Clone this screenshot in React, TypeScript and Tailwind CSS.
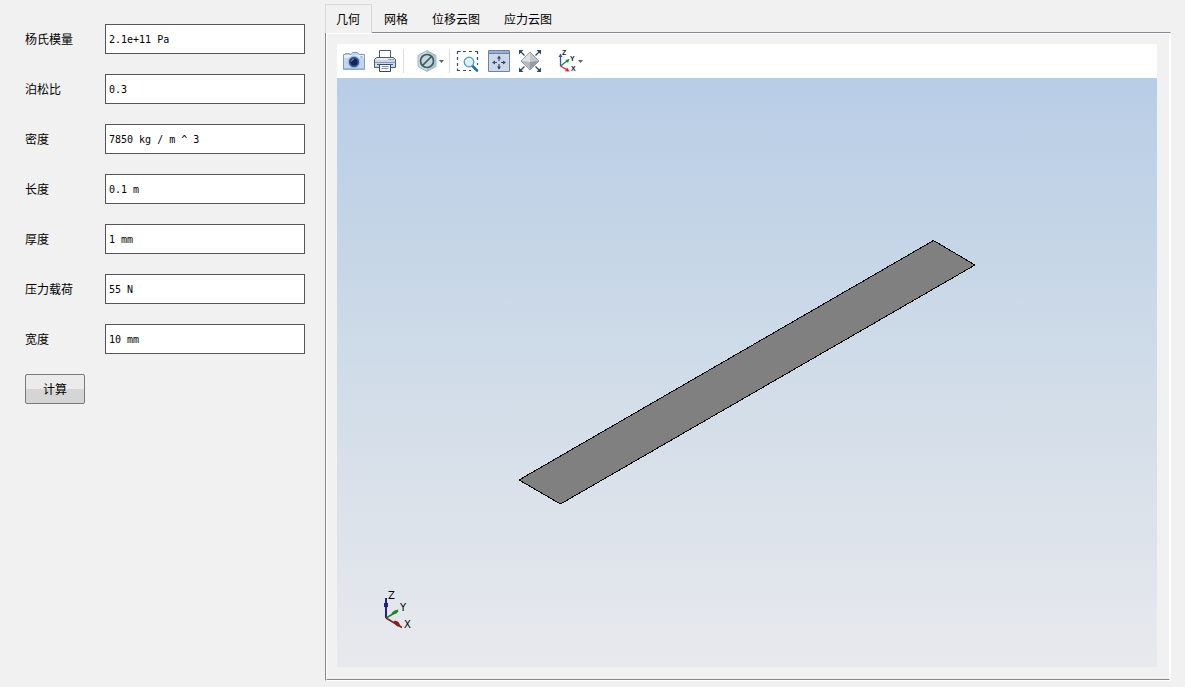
import { useState } from "react";

const FIELDS = [
  { id: "young", label: "杨氏模量", value: "2.1e+11 Pa" },
  { id: "poisson", label: "泊松比", value: "0.3" },
  { id: "density", label: "密度", value: "7850 kg / m ^ 3" },
  { id: "length", label: "长度", value: "0.1 m" },
  { id: "thickness", label: "厚度", value: "1 mm" },
  { id: "load", label: "压力载荷", value: "55 N" },
  { id: "width", label: "宽度", value: "10 mm" },
];

const TABS = ["几何", "网格", "位移云图", "应力云图"];

function CameraIcon() {
  return (
    <svg viewBox="0 0 24 24" className="h-6 w-6">
      <path d="M1.500 5.500h2v-1h4v1h1.500l1.500-2h5l1.500 2h5.500v15h-21z" fill="#c3d6ee" stroke="#7f9dc8" />
      <path d="M2 6h20v3H2z" fill="#e3edf8" />
      <path d="M2 19h20v1.500H2z" fill="#9db8dc" />
      <circle cx="12" cy="13" r="6.500" fill="#a9c1e2" />
      <circle cx="12" cy="13" r="5.200" fill="#38588f" />
      <circle cx="12" cy="13" r="3.600" fill="#10254f" />
      <path d="M9.500 12.500q.3-2.300 2.500-2.500" stroke="#7f9cca" fill="none" />
      <path d="M18.500 8h2" stroke="#5c7fb3" />
    </svg>
  );
}

function PrinterIcon() {
  return (
    <svg viewBox="0 0 24 24" className="h-6 w-6">
      <path d="M6.500 9V1.500h11V9" fill="#fff" stroke="#465b7e" />
      <path d="M3.500 8.500h17l2 2v8h-21v-8z" fill="#cfd7e4" stroke="#465b7e" />
      <path d="M4 9h16v2H4z" fill="#e8edf5" />
      <path d="M2 13.500h20" stroke="#8c9bb5" />
      <path d="M15.500 10.500h1M17.500 10.500h1M19.500 10.500h1" stroke="#465b7e" />
      <path d="M4 15.500h16" stroke="#465b7e" />
      <path d="M6.500 15.500h11v7h-11z" fill="#fff" stroke="#32476c" />
      <path d="M8.500 17.500h7M8.500 19.500h7" stroke="#8192ad" />
    </svg>
  );
}

function HideIcon() {
  return (
    <svg viewBox="0 0 24 24" className="h-6 w-6">
      <path d="M12 1.500l9 5v11l-9 5-9-5v-11z" fill="#b0c9ce" stroke="#9bb8be" />
      <path d="M12 2v20l-8.500-5V7z" fill="#c8dadd" />
      <circle cx="12" cy="12" r="6.500" fill="#c3d6da" stroke="#3e5864" strokeWidth="1.700" />
      <path d="M7.500 16.500l9-9" stroke="#3e5864" strokeWidth="1.700" />
    </svg>
  );
}

function ZoomBoxIcon() {
  return (
    <svg viewBox="0 0 24 24" className="h-6 w-6" fill="none">
      <path
        d="M2.500 5V2.500h3M8 2.500h3M14 2.500h3M20 2.500h2.500V5M22.500 8v3M22.500 14v2M2.500 8v3M2.500 14v3M2.500 19.500v2H5M8 21.500h3M14 21.500h2"
        stroke="#30497a"
        strokeWidth="1.200"
      />
      <path d="M17.500 17l4.500 4.500" stroke="#2a6da6" strokeWidth="2.600" strokeLinecap="round" />
      <circle cx="14" cy="13" r="4.800" fill="#dcf0fb" stroke="#4a9acb" strokeWidth="1.300" />
      <path d="M11 13q0-3 3-3" stroke="#fff" />
    </svg>
  );
}

function FitIcon() {
  return (
    <svg viewBox="0 0 24 24" className="h-6 w-6">
      <path d="M1.500 1.500h21v21h-21z" fill="#ccd8e8" stroke="#6c82a8" />
      <path d="M2 2h20v2H2z" fill="#9aadca" />
      <path d="M2 4.500h20" stroke="#6c82a8" />
      <path d="M12 8v4M12 15v5M6 13.500h4M14 13.500h4" stroke="#33476d" strokeWidth="1.200" />
      <path d="M12 6.500l2 3h-4zM12 20.500l-2-3h4zM5 13.500l3-2v4zM19 13.500l-3 2v-4z" fill="#33476d" />
    </svg>
  );
}

function ExtentsIcon() {
  return (
    <svg viewBox="0 0 24 24" className="h-6 w-6">
      <path d="M11 3l9 9-9 9-9-9z" fill="#c2c7cc" stroke="#7d858e" strokeWidth=".8" />
      <path d="M11 3.500V13l-8.500-1z" fill="#dfe2e5" />
      <path d="M2.500 12l8.500 1v7.500z" fill="#b4bac0" />
      <path d="M19.500 12L11 13v7.500z" fill="#939ba4" />
      <path d="M1.500 2.500l4 4M20.500 2.500l-4 4M1.500 21.500l4-4M20.500 21.500l-4-4" stroke="#2d4872" strokeWidth="1.200" />
      <path d="M0 1h4.500L0 5.500zM22 1v4.500L17.500 1zM0 23v-4.500L4.500 23zM22 23h-4.500l4.500-4.500z" fill="#2d4872" />
    </svg>
  );
}

function ViewAxesIcon() {
  return (
    <svg viewBox="0 0 24 24" className="h-6 w-6 overflow-visible font-['Liberation_Sans',sans-serif] text-[7px] font-bold">
      <path d="M6.500 17V7" stroke="#2d59a5" strokeWidth="1.300" />
      <path d="M6.500 4.500l2 3.500h-4z" fill="#2d59a5" />
      <path d="M6.500 17l6.500-5" stroke="#168447" strokeWidth="1.300" />
      <path d="M15.500 10l-1.500 4-2.500-3z" fill="#168447" />
      <path d="M6.500 17l6 3.500" stroke="#e31f2d" strokeWidth="1.300" />
      <path d="M15.500 22.500l-4.500-.3 2.200-3.700z" fill="#e31f2d" />
      <text x="8" y="6" fill="#222">Z</text>
      <text x="16" y="12" fill="#222">Y</text>
      <text x="17" y="22" fill="#222">X</text>
    </svg>
  );
}

function Caret() {
  return (
    <svg viewBox="0 0 5 3" className="h-[3px] w-[5px]">
      <path d="M0 0h5L2.500 3z" fill="#606060" />
    </svg>
  );
}

function Separator() {
  return <div className="h-6 w-px bg-[#dcdcdc]" />;
}

function Toolbar() {
  return (
    <div className="flex h-[34px] items-center bg-white pl-[5px]">
      <button aria-label="截图"><CameraIcon /></button>
      <button aria-label="打印" className="mr-1.5 ml-[7px]"><PrinterIcon /></button>
      <Separator />
      <button aria-label="隐藏" className="mr-[5px] ml-[11px] flex items-center"><HideIcon /><Caret /></button>
      <Separator />
      <div className="ml-[5px] flex items-center gap-2">
        <button aria-label="框选缩放"><ZoomBoxIcon /></button>
        <button aria-label="适合窗口"><FitIcon /></button>
        <button aria-label="缩放到范围"><ExtentsIcon /></button>
      </div>
      <button aria-label="视图方向" className="ml-[11px] flex items-center"><ViewAxesIcon /><Caret /></button>
    </div>
  );
}

function AxisTriad() {
  return (
    <svg
      viewBox="0 0 40 44"
      className="absolute bottom-[35px] left-[43px] h-11 w-10 font-['DejaVu_Sans',sans-serif] text-[10px]"
    >
      <path d="M6 30V10" stroke="#20208a" strokeWidth="2" />
      <path d="M4 19v-4h4v4z" fill="#20208a" />
      <path d="M6 30l12-7" stroke="#208020" strokeWidth="1.500" />
      <path d="M18.500 21.500l-2 4-4 1-1-1.500 3-2.500z" fill="#208020" />
      <path d="M6 30l16 9.500" stroke="#802020" strokeWidth="1.500" />
      <path d="M13 34.500l2-2 3.500 1.500 2 4-3 .5z" fill="#802020" />
      <text x="8" y="11" fill="#000">Z</text>
      <text x="20" y="23" fill="#000">Y</text>
      <text x="24" y="40" fill="#000">X</text>
    </svg>
  );
}

function Viewport() {
  return (
    <div className="relative flex min-h-0 flex-1 bg-linear-to-b from-[#b8cde6] via-[#d0dce8] to-[#e8e9ed]">
      <svg viewBox="0 0 820 589" className="h-full w-full">
        <path
          d="M596.500 162.500l41.500 24.500-414.500 239-41.500-24z"
          fill="#808080"
          stroke="#000"
          strokeLinejoin="round"
          shapeRendering="crispEdges"
        />
      </svg>
      <AxisTriad />
    </div>
  );
}

export default function App() {
  const [active, setActive] = useState(0);

  return (
    <div className="flex h-screen gap-5 bg-[#f1f1f1] pr-[14px] pb-1.5 pl-[25px] font-['Liberation_Sans','Noto_Sans_CJK_SC',sans-serif] text-xs text-black">
      <form className="flex w-[280px] shrink-0 flex-col items-start gap-5 pt-6" onSubmit={(e) => e.preventDefault()}>
        {FIELDS.map((field) => (
          <div key={field.id} className="flex w-full items-center">
            <label htmlFor={field.id} className="w-20 shrink-0 pt-0.5">{field.label}</label>
            <input
              id={field.id}
              type="text"
              defaultValue={field.value}
              className="h-[30px] min-w-0 flex-1 border border-[#555559] bg-white px-[3px] font-['DejaVu_Sans_Mono',monospace] text-[10px] outline-none"
            />
          </div>
        ))}
        <button
          type="submit"
          className="h-[30px] w-[60px] rounded-xs border border-[#7a7a7a] bg-linear-to-b from-[#ebebeb] from-50% to-[#d5d5d5] to-50% pt-0.5"
        >
          计算
        </button>
      </form>

      <main className="flex min-w-0 flex-1 flex-col pt-1">
        <div role="tablist" className="flex h-7">
          {TABS.map((tab, i) => (
            <button
              key={tab}
              role="tab"
              aria-selected={i === active}
              onClick={() => setActive(i)}
              className={
                i === active
                  ? "z-10 h-[29px] border border-b-0 border-[#d9d9d9] bg-[#f1f1f1] pt-px pr-[11px] pl-[10px]"
                  : "h-[29px] px-3 pt-0.5"
              }
            >
              {tab}
            </button>
          ))}
        </div>
        <div className="flex min-h-0 flex-1 flex-col border border-t-[#85868f] border-r-white border-b-white border-l-[#85868f]">
          <div className="flex min-h-0 flex-1 flex-col border border-t-white border-r-white border-b-[#85868f] border-l-white pt-[10px] pr-3 pb-3 pl-[10px]">
            <Toolbar />
            <Viewport />
          </div>
        </div>
      </main>
    </div>
  );
}
